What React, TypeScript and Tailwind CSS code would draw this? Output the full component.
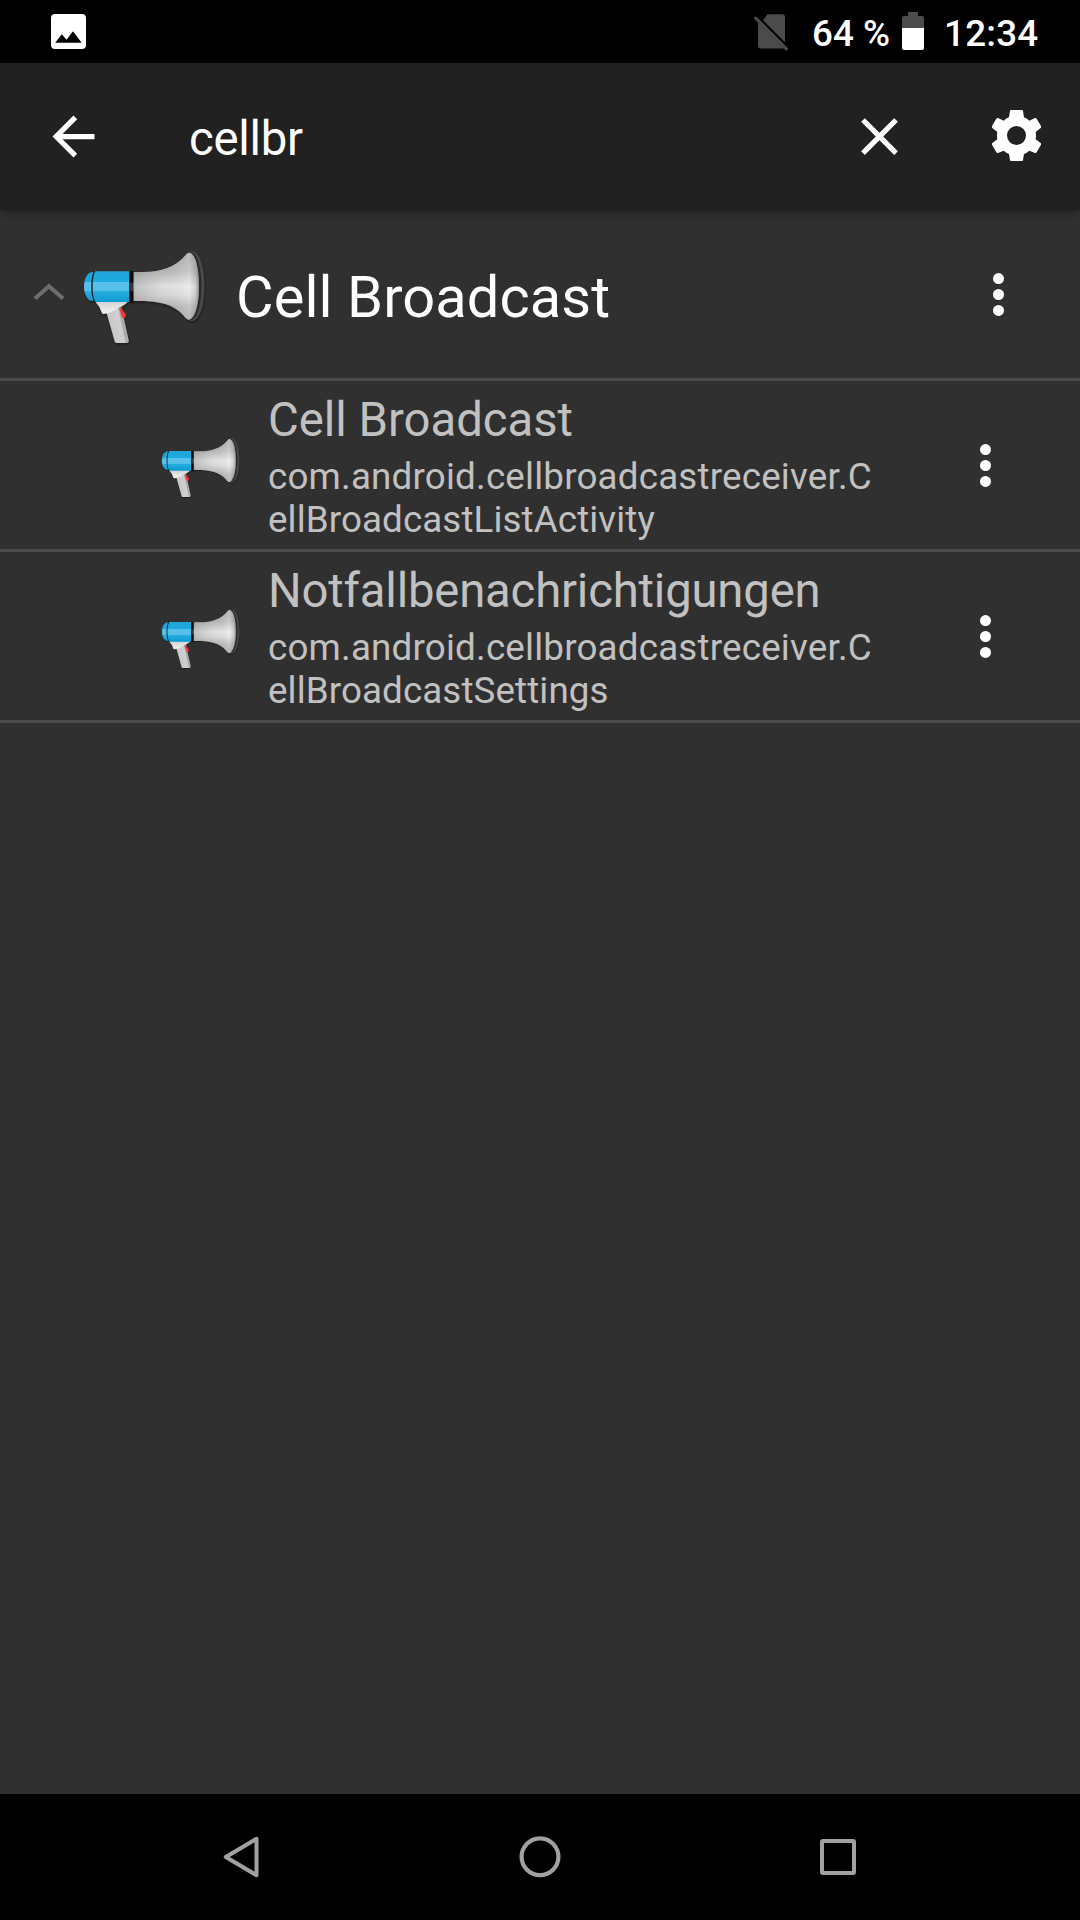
import React from "react";

function Megaphone({ id, className }: { id: string; className: string }) {
  return (
    <svg viewBox="243 3 378 378" className={className} aria-hidden="true">
      <defs>
        <linearGradient id={`${id}-horn`} x1="0" y1="68" x2="0" y2="270" gradientUnits="userSpaceOnUse">
          <stop offset="0" stopColor="#a2a2a2" />
          <stop offset="0.28" stopColor="#b8b8b8" />
          <stop offset="0.5" stopColor="#e8e8e8" />
          <stop offset="0.62" stopColor="#dcdcdc" />
          <stop offset="0.8" stopColor="#b3b3b3" />
          <stop offset="1" stopColor="#a0a0a0" />
        </linearGradient>
        <linearGradient id={`${id}-shade`} x1="400" y1="0" x2="597" y2="0" gradientUnits="userSpaceOnUse">
          <stop offset="0" stopColor="#808080" stopOpacity="0.4" />
          <stop offset="0.5" stopColor="#a0a0a0" stopOpacity="0.1" />
          <stop offset="0.85" stopColor="#ffffff" stopOpacity="0.25" />
          <stop offset="0.94" stopColor="#999999" stopOpacity="0.25" />
          <stop offset="1" stopColor="#666666" stopOpacity="0.7" />
        </linearGradient>
        <linearGradient id={`${id}-blue`} x1="0" y1="124" x2="0" y2="216" gradientUnits="userSpaceOnUse">
          <stop offset="0" stopColor="#22a4d8" />
          <stop offset="0.34" stopColor="#1caadf" />
          <stop offset="0.36" stopColor="#56c0e9" />
          <stop offset="0.64" stopColor="#56c0e9" />
          <stop offset="0.66" stopColor="#27ade0" />
          <stop offset="1" stopColor="#0c9bd3" />
        </linearGradient>
        <linearGradient id={`${id}-grip`} x1="325" y1="290" x2="382" y2="278" gradientUnits="userSpaceOnUse">
          <stop offset="0" stopColor="#c6c6c6" />
          <stop offset="0.65" stopColor="#d0d0d0" />
          <stop offset="0.75" stopColor="#a8a8a8" />
          <stop offset="1" stopColor="#b8b8b8" />
        </linearGradient>
        <linearGradient id={`${id}-mount`} x1="0" y1="215" x2="0" y2="252" gradientUnits="userSpaceOnUse">
          <stop offset="0" stopColor="#d2d2d2" />
          <stop offset="1" stopColor="#f5f5f5" />
        </linearGradient>
        <filter id={`${id}-soft`} x="-10%" y="-10%" width="125%" height="125%">
          <feDropShadow dx="2" dy="5" stdDeviation="3" floodColor="#000" floodOpacity="0.4" />
        </filter>
      </defs>
      <g filter={`url(#${id}-soft)`}>
        <path d="M572 64C598 60 613 108 613 170C613 232 596 281 568 272Z" fill="#484848" />
        <path d="M570 67C592 66 604 112 604 170C604 228 590 272 568 271Z" fill="#2b2b2b" />
        <path d="M319 246L364 232L386 331Q387 339 381 339H350Q345 339 344 334Z" fill={`url(#${id}-grip)`} />
        <path d="M357 236Q360 231 365 237L378 254Q378 264 368 265Q363 258 361 246Z" fill="#f53a35" />
        <path d="M287 213H384Q380 221 372 225L346 240Q329 250 309 252Q307 252 305 247Q302 232 289 219Z" fill={`url(#${id}-mount)`} />
        <path d="M280 125C260 126 252 148 252 170C252 192 262 213 280 213Z" fill={`url(#${id}-blue)`} />
        <path d="M285 124C274 142 274 197 285 215" fill="none" stroke="#10212a" strokeWidth="6" />
        <path d="M286 124H389V216H286Q278 201 278 170Q278 139 286 124Z" fill={`url(#${id}-blue)`} />
        <path d="M388 124H402V216H388Z" fill="#080808" />
        <path d="M388 158H402V183H388Z" fill="#343434" />
        <path d="M401 126H430C482 125 527 112 557 75Q563 67 571 69C589 76 597 121 597 169C597 219 587 259 571 268Q564 272 557 264C532 231 494 215 435 213H401Z" fill={`url(#${id}-horn)`} />
        <path d="M401 126H430C482 125 527 112 557 75Q563 67 571 69C589 76 597 121 597 169C597 219 587 259 571 268Q564 272 557 264C532 231 494 215 435 213H401Z" fill={`url(#${id}-shade)`} />
      </g>
    </svg>
  );
}

function MoreButton({ label }: { label: string }) {
  return (
    <button aria-label={label} className="flex h-[63px] w-[63px] items-center justify-center">
      <svg viewBox="0 0 11 43" className="h-[43px] w-[11px] fill-white">
        <circle cx="5.5" cy="5.6" r="5.5" />
        <circle cx="5.5" cy="21.5" r="5.5" />
        <circle cx="5.5" cy="37.4" r="5.5" />
      </svg>
    </button>
  );
}

function StatusBar() {
  return (
    <div className="flex h-[63px] shrink-0 bg-black pl-[51px] pr-[40px] text-[36.75px] font-medium leading-[63px]">
      <svg viewBox="0 0 35 35" className="mt-[14px] h-[35px] w-[35px]">
        <path fillRule="evenodd" d="M4 0H31Q35 0 35 4V31Q35 35 31 35H4Q0 35 0 31V4Q0 0 4 0ZM4.2 28.8H30.6L22 17.2L15.5 25.8L10.8 20.2Z" fill="#fff" />
      </svg>
      <svg viewBox="0 0 36 38" className="ml-[668px] mt-[14px] h-[38px] w-[36px]">
        <path d="M13.5 0.3H28Q31 0.3 31 3.3V28.3L9 6.2ZM4 8.8L29.8 34.4H7Q4 34.4 4 31.4Z" fill="#4b4b4b" />
        <path d="M1.7 4.1L32.4 34.8" stroke="#4b4b4b" strokeWidth="3.2" strokeLinecap="round" />
      </svg>
      <span className="ml-[22px] mt-[2px] w-[90px] whitespace-nowrap">64 %</span>
      <svg viewBox="0 0 22 38" className="mt-3 h-[38px] w-[22px]">
        <path d="M6 0H16V4H20Q22 4 22 6V16H0V6Q0 4 2 4H6Z" fill="#4b4b4b" />
        <path d="M0 16H22V36Q22 38 20 38H2Q0 38 0 36Z" fill="#fff" />
      </svg>
      <span className="ml-5 mt-[2px] whitespace-nowrap tracking-[0.25px]">12:34</span>
    </div>
  );
}

function SearchBar() {
  return (
    <header className="relative z-10 flex h-[147px] shrink-0 items-center bg-[#212121] shadow-[0_3px_9px_rgba(0,0,0,0.3)]">
      <button aria-label="Zurück" className="ml-[42px]">
        <svg viewBox="0 0 24 24" className="h-[63px] w-[63px] fill-white">
          <path d="M20 11H7.83l5.59-5.59L12 4l-8 8 8 8 1.41-1.41L7.83 13H20v-2z" />
        </svg>
      </button>
      <div className="ml-[84px] mt-1 w-[658.5px] text-[47.25px] leading-[56px] tracking-[-0.25px]">cellbr</div>
      <button aria-label="Suche löschen">
        <svg viewBox="0 0 24 24" className="h-[63px] w-[63px] fill-white">
          <path d="M19 6.41L17.59 5 12 10.59 6.41 5 5 6.41 10.59 12 5 17.59 6.41 19 12 13.41 17.59 19 19 17.59 13.41 12z" />
        </svg>
      </button>
      <button aria-label="Einstellungen" className="mb-[2px] ml-[81px]">
        <svg viewBox="0 0 147 153" className="h-[51px] w-[49px] fill-white">
          <path fillRule="evenodd" d="M54 3Q54 0 57 0H90Q93 0 93 3L96 22Q104 25 112 32L129 24Q132 23 134 26L147 48Q149 52 146 54L131 66Q133 77 131 88L146 99Q149 101 147 104L134 127Q132 130 129 129L112 122Q104 129 96 132L93 150Q93 153 90 153H57Q54 153 54 150L51 132Q43 129 35 122L18 129Q15 130 13 127L0 104Q-2 101 1 99L16 88Q14 77 16 66L1 54Q-2 52 0 48L13 26Q15 23 18 24L35 32Q43 25 51 22ZM73.5 48A28.5 28.5 0 1 0 73.5 105A28.5 28.5 0 1 0 73.5 48Z" />
        </svg>
      </button>
    </header>
  );
}

type Activity = { id: string; title: string; titleClass: string; pkg: string; name: string };

const activities: Activity[] = [
  {
    id: "list",
    title: "Cell Broadcast",
    titleClass: "tracking-normal",
    pkg: "com.android.cellbroadcastreceiver.C",
    name: "ellBroadcastListActivity",
  },
  {
    id: "settings",
    title: "Notfallbenachrichtigungen",
    titleClass: "tracking-[-0.18px]",
    pkg: "com.android.cellbroadcastreceiver.C",
    name: "ellBroadcastSettings",
  },
];

function ActivityRow({ id, title, titleClass, pkg, name }: Activity) {
  return (
    <div className="flex h-[171px] items-center border-b-[3px] border-[#4a4a4a] pl-[160px] text-[#c1c1c1]">
      <Megaphone id={id} className="h-[81px] w-[81px] shrink-0" />
      <div className="ml-[27px] mt-[2px] w-[686px] whitespace-nowrap">
        <div className={`text-[47.25px] leading-[56px] ${titleClass}`}>{title}</div>
        <div className="mt-[7px] text-[36.75px] leading-[43px]">
          <div className="tracking-[0.2px]">{pkg}</div>
          <div className="tracking-[0.11px]">{name}</div>
        </div>
      </div>
      <MoreButton label={`Optionen für ${title}`} />
    </div>
  );
}

function NavigationBar() {
  return (
    <nav className="flex h-[126px] shrink-0 items-center bg-black">
      <svg viewBox="0 0 36 42" className="ml-[223px] h-[42px] w-[36px]">
        <path d="M33.5 2.8V39.2L2.8 21Z" fill="none" stroke="#a1a1a1" strokeWidth="4" strokeLinejoin="round" />
      </svg>
      <svg viewBox="0 0 42 42" className="ml-[260px] h-[42px] w-[42px]">
        <circle cx="21" cy="20.8" r="18.4" fill="none" stroke="#a1a1a1" strokeWidth="4.2" />
      </svg>
      <div className="ml-[259px] h-9 w-9 rounded-[3px] border-4 border-[#a1a1a1]" />
    </nav>
  );
}

export default function App() {
  return (
    <div className="flex h-[1920px] w-[1080px] flex-col overflow-hidden bg-[#303030] font-[Roboto,sans-serif] text-white">
      <StatusBar />
      <SearchBar />
      <main className="flex-1">
        <div className="flex h-[171px] items-center border-b-[3px] border-[#4a4a4a] pl-[33px]">
          <svg viewBox="0 0 32 18" className="mb-[5px] h-[18px] w-8">
            <path d="M2 15.5L16 3.2L30 15.5" fill="none" stroke="#6e6e6e" strokeWidth="4" />
          </svg>
          <Megaphone id="app" className="ml-4 h-[126px] w-[126px]" />
          <div className="ml-[29px] mt-[5px] w-[731px] text-[57.75px] leading-[68px] tracking-[0.1px]">Cell Broadcast</div>
          <MoreButton label="Optionen" />
        </div>
        {activities.map((activity) => (
          <ActivityRow key={activity.id} {...activity} />
        ))}
      </main>
      <NavigationBar />
    </div>
  );
}
